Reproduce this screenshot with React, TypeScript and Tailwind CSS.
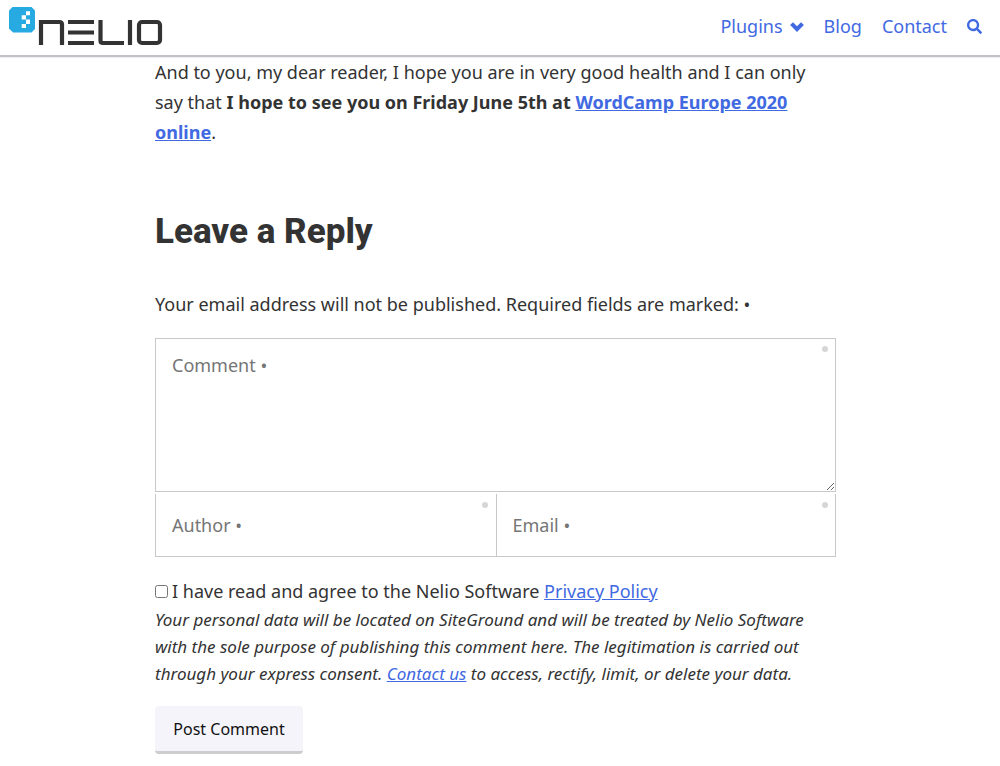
import { FaSearch } from "react-icons/fa";

const LINK = "text-[#4169e1] underline";

function Logo() {
  return (
    <svg width="156" height="42" viewBox="8 6 156 42" role="img" aria-label="Nelio">
      <path d="M12.500 7h19l3.500 3.500v18.500l-3.500 3.500H13L9 28.500V10.500z" fill="#27aae1" />
      <path d="M26 11.3h4v4h-4zM21.7 15.3h4.3v4.3h-4.3zM26 19.6h4v4.3h-4zM21.7 23.9h4.3v4h-4.3z" fill="#fff" />
      <g fill="none" stroke="#333" strokeWidth="4.2">
        <path d="M41 45V22h18.5q2.5 0 2.5 2.5V45" />
        <path d="M68 22h26M68 32.500h26M68 43h26" />
        <path d="M100.500 20v20.500q0 2.500 2.500 2.500H124" />
        <path d="M130 20v25" />
        <rect x="139" y="22" width="21" height="21" rx="3" />
      </g>
    </svg>
  );
}

function Chevron() {
  return (
    <svg width="14" height="14" viewBox="0 0 14 14" fill="currentColor" aria-hidden="true">
      <path d="M3 3.300 7 7.200l4-3.900 2.900 2.800L7 13 .1 6.100z" />
    </svg>
  );
}

function Header() {
  return (
    <header className="flex h-[57px] items-start justify-between border-b-2 border-[#c3c1c8] bg-white pt-1.5 pr-[18px] pl-2 shadow-[0_1px_1px_#eeeeee]">
      <a href="#home">
        <Logo />
      </a>
      <nav className="flex h-10 items-center gap-5 text-[18px] text-[#4169e1]">
        <a href="#plugins" className="flex items-center gap-[7px]">
          Plugins <Chevron />
        </a>
        <a href="#blog">Blog</a>
        <a href="#contact">Contact</a>
        <button type="button" aria-label="Search">
          <FaSearch size={15} />
        </button>
      </nav>
    </header>
  );
}

function RequiredDot() {
  return <span className="absolute top-2 right-2 size-1.5 rounded-full bg-[#d6d6d6]" />;
}

function CommentForm() {
  return (
    <form className="mt-[19px]">
      <div className="relative">
        <textarea
          aria-label="Comment"
          placeholder="Comment •"
          className="block h-[154px] w-full resize border border-[#c8c8c8] bg-white px-4 py-[11px] leading-[30px] placeholder:text-[#757575]"
        />
        <RequiredDot />
      </div>

      <div className="mt-0.5 grid grid-cols-2">
        <div className="relative">
          <input
            type="text"
            aria-label="Author"
            placeholder="Author •"
            className="block h-[63px] w-full border-b border-l border-[#c8c8c8] bg-white px-4 placeholder:text-[#757575]"
          />
          <RequiredDot />
        </div>
        <div className="relative">
          <input
            type="email"
            aria-label="Email"
            placeholder="Email •"
            className="block h-[63px] w-full border-x border-b border-[#c8c8c8] bg-white px-4 placeholder:text-[#757575]"
          />
          <RequiredDot />
        </div>
      </div>

      <div className="mt-[19px] flex items-center gap-1">
        <input id="privacy" type="checkbox" className="size-[13px]" />
        <label htmlFor="privacy">
          I have read and agree to the Nelio Software{" "}
          <a href="#privacy-policy" className={LINK}>
            Privacy Policy
          </a>
        </label>
      </div>
      <p className="text-[17px] leading-[27px] italic">
        Your personal data will be located on SiteGround and will be treated by Nelio Software
        with the sole purpose of publishing this comment here. The legitimation is carried out
        through your express consent.{" "}
        <a href="#contact" className={LINK}>
          Contact us
        </a>{" "}
        to access, rectify, limit, or delete your data.
      </p>

      <button
        type="submit"
        className="mt-[19px] h-12 min-w-[148px] rounded border-b-3 border-[#cdcdcf] bg-[#f5f4fa] px-4 text-[16px] text-[#111]"
      >
        Post Comment
      </button>
    </form>
  );
}

export default function App() {
  return (
    <div className="min-h-screen bg-white font-['Noto_Sans',sans-serif] text-[18px] leading-[30px] text-[#333]">
      <Header />
      <main className="mx-auto max-w-[690px] pr-[9px] pb-3">
        <p>
          And to you, my dear reader, I hope you are in very good health and I can only say that{" "}
          <strong>I hope to see you on Friday June 5th at </strong>
          <a href="#wordcamp" className="font-bold text-[#4169e1] underline">
            WordCamp Europe 2020 online
          </a>
          .
        </p>
        <h2 className="mt-[63px] font-[Roboto,sans-serif] text-[35px] leading-[44px] font-extrabold">
          Leave a Reply
        </h2>
        <p className="mt-[35px]">
          Your email address will not be published. Required fields are marked: •
        </p>
        <CommentForm />
      </main>
    </div>
  );
}
